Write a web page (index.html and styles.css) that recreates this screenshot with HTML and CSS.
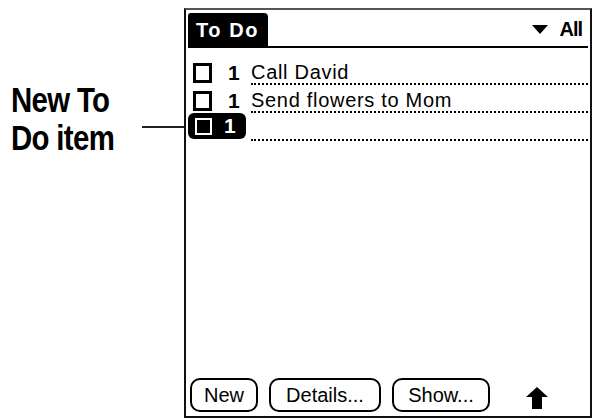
FILE: index.html
```html
<!DOCTYPE html>
<html>

<head>
    <title>To Do - New To Do item</title>
    <link rel="stylesheet" href="styles.css">
</head>

<body>
    <div class="page">
        <div class="callout">
            <div class="callout-text">New To<br>Do item</div>
            <div class="callout-line"></div>
        </div>

        <div class="device">
            <div class="titlebar">
                <div class="title">To Do</div>
                <div class="category"><span class="tri"></span>All</div>
            </div>

            <ul class="todo-list">
                <li class="row">
                    <div class="mark"><span class="check"></span><span class="prio">1</span></div>
                    <div class="desc">Call David</div>
                </li>
                <li class="row">
                    <div class="mark"><span class="check"></span><span class="prio">1</span></div>
                    <div class="desc">Send flowers to Mom</div>
                </li>
                <li class="row">
                    <div class="mark selected"><span class="check"></span><span class="prio">1</span></div>
                    <div class="desc"></div>
                </li>
            </ul>

            <div class="buttons">
                <button type="button" class="btn btn-new">New</button>
                <button type="button" class="btn btn-details">Details...</button>
                <button type="button" class="btn btn-show">Show...</button>
                <svg class="scroll-up" width="24" height="24" viewBox="0 0 24 24">
                    <polygon points="12,1 23,11 17,11 17,23 7,23 7,11 1,11" fill="#000" />
                </svg>
            </div>
        </div>
    </div>
</body>

</html>
```

FILE: styles.css
```css
body {
    margin: 0;
    background: #fff;
    color: #000;
    font-family: "Liberation Sans", Arial, sans-serif;
}

.page {
    display: flex;
    width: 595px;
    height: 420px;
}

/* label on the left */
.callout {
    width: 184px;
    display: flex;
    align-items: flex-start;
    padding-top: 81px;
    box-sizing: border-box;
}

.callout-text {
    margin-left: 11px;
    width: 110px;
    font-weight: bold;
    font-size: 35px;
    line-height: 38px;
    letter-spacing: -0.8px;
    white-space: nowrap;
    /* narrow bold face is not installed, squeeze the regular one */
    transform: scaleX(0.84);
    transform-origin: left top;
}

.callout-line {
    margin-left: auto;
    margin-top: 45px;
    width: 42px;
    height: 2px;
    background: #222;
}

/* the palm screen */
.device {
    margin-top: 8px;
    width: 408px;
    height: 410px;
    border: 2px solid #111;
    border-top-color: #555;
    box-sizing: border-box;
    display: flex;
    flex-direction: column;
}

.titlebar {
    display: flex;
    align-items: flex-end;
    justify-content: space-between;
    margin: 3px 2px 0 2px;
    border-bottom: 2px solid #000;
}

.title {
    background: #000;
    color: #fff;
    font-weight: bold;
    font-size: 20px;
    letter-spacing: 1.6px;
    height: 33px;
    line-height: 34px;
    padding: 0 9px 0 8px;
    border-radius: 3px 4px 0 0;
}

.category {
    display: flex;
    align-items: center;
    font-size: 20px;
    font-weight: bold;
    letter-spacing: -1px;
    padding-right: 6px;
    height: 33px;
}

.tri {
    width: 0;
    height: 0;
    border-left: 8px solid transparent;
    border-right: 8px solid transparent;
    border-top: 9px solid #000;
    margin-right: 11px;
}

.todo-list {
    list-style: none;
    margin: 9px 0 0 0;
    padding: 0 2px;
    flex: 1;
}

.row {
    display: flex;
    height: 28px;
}

.mark {
    width: 58px;
    height: 26px;
    display: flex;
    align-items: center;
    box-sizing: border-box;
    padding-left: 5px;
}

.check {
    width: 19px;
    height: 20px;
    border: 3px solid #000;
    box-sizing: border-box;
    margin-top: 6px;
}

.prio {
    margin-left: 16px;
    margin-top: 6px;
    font-weight: bold;
    font-size: 21px;
}

.mark.selected {
    background: #000;
    border-radius: 6px;
    padding-left: 7px;
}

.mark.selected .check {
    margin-top: 0;
    width: 17px;
    height: 17px;
    border: 2px solid #fff;
    background: #000;
}

.mark.selected .prio {
    margin-top: 0;
    margin-left: 12px;
    color: #fff;
}

.desc {
    flex: 1;
    margin-left: 5px;
    height: 28px;
    box-sizing: border-box;
    border-bottom: 2px dotted #000;
    font-size: 20px;
    letter-spacing: 0.7px;
    line-height: 22px;
    padding-top: 4px;
    white-space: nowrap;
}

.buttons {
    display: flex;
    align-items: flex-end;
    padding: 0 0 4px 4px;
}

.btn {
    height: 34px;
    border: 2px solid #000;
    border-radius: 10px;
    background: #fff;
    font-family: "Liberation Sans", Arial, sans-serif;
    font-size: 20px;
    color: #000;
    padding: 0;
    margin-right: 11px;
}

.btn-new {
    width: 68px;
}

.btn-details {
    width: 112px;
}

.btn-show {
    width: 98px;
}

.scroll-up {
    margin-left: 24px;
    margin-bottom: 2px;
}
```
